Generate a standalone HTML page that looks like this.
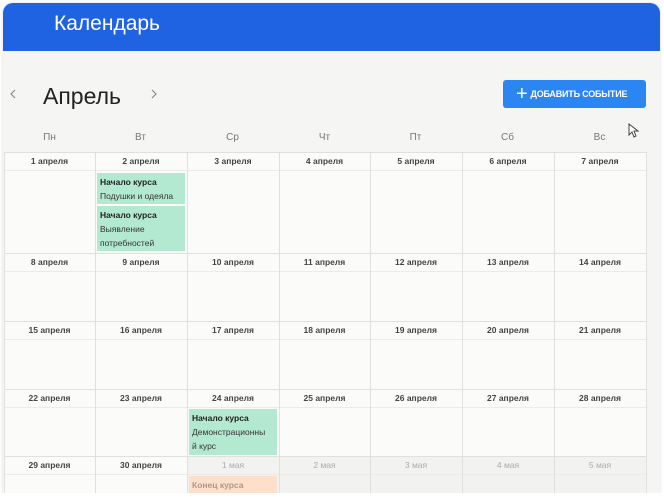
<!DOCTYPE html>
<html><head><meta charset="utf-8"><style>
*{margin:0;padding:0;box-sizing:border-box}
body{width:664px;height:499px;background:#fff;font-family:"Liberation Sans","DejaVu Sans",sans-serif;position:relative;overflow:hidden}
.page{position:absolute;left:3px;top:3px;width:657px;height:490px;background:#f5f6f4;border-radius:10px 10px 0 0;overflow:hidden;box-shadow:0 0 3px rgba(0,0,0,.15)}
.hdr{position:absolute;left:0;top:0;width:657px;height:48px;background:#1f63e2;color:#fff;font-size:21px;padding:9px 0 0 51px}
.a{position:absolute}
.dn{position:absolute;top:132px;font-size:10px;color:#777;text-align:center;width:91px}
.bg{position:absolute;background:#fbfcfa}
.dh{position:absolute;font-size:8.5px;font-weight:bold;color:#444;text-align:center;line-height:18px}
.dh.g{font-weight:normal;color:#aaa}
.hl{position:absolute;height:1px;background:#e0e0de}
.vl{position:absolute;width:1px;background:#e0e0de}
.ev{position:absolute;background:#b3e9d1;font-size:8.5px;color:#333;padding:2px 3px;line-height:14px}
.ev b{color:#222}
</style></head><body>
<div class="page">
<div class="hdr">Календарь</div>
<div class="a" style="left:5px;top:84px"><svg width="10" height="14"><path d="M7 3L3 7L7 11" fill="none" stroke="#888" stroke-width="1.2"/></svg></div>
<div class="a" style="left:40px;top:80px;color:#222;font-size:23px">Апрель</div>
<div class="a" style="left:146px;top:84px"><svg width="10" height="14"><path d="M3 3L7 7L3 11" fill="none" stroke="#888" stroke-width="1.2"/></svg></div>
<div class="a" style="left:500px;top:77px;width:143px;height:28px;background:#2b86f1;border-radius:3px;color:#fff;font-size:9px;font-weight:bold;line-height:28px;padding-left:13px;letter-spacing:-0.2px"><span style="font-size:20px;font-weight:normal;vertical-align:-3px;margin-right:3px">+</span>ДОБАВИТЬ СОБЫТИЕ</div>
<div class="a" style="left:625px;top:120px"><svg width="12" height="16"><path d="M1 1L1 12L4 9L6 14L8 13L6 8L10 8Z" fill="#fff" stroke="#444" stroke-width="1"/></svg></div>
</div>
<div id="g"></div>
<script>
var names=["Пн","Вт","Ср","Чт","Пт","Сб","Вс"];
var xs=[4,95,187,279,370,462,554,646];
var rows=[[152,170,253],[253,271,321],[321,339,389],[389,407,456],[456,474,496]];
var h="";
for(var i=0;i<7;i++)h+='<div class="dn" style="left:'+xs[i]+'px">'+names[i]+'</div>';
h+='<div class="bg" style="left:4px;top:152px;width:642px;height:344px"></div>';
h+='<div class="bg" style="left:187px;top:456px;width:459px;height:40px;background:#f2f3f1"></div>';
var d=1;
for(var r=0;r<5;r++){for(var c=0;c<7;c++){
var x=xs[c],w=xs[c+1]-x,R=rows[r];var lab,g=false;
if(d<=30)lab=d+" апреля";else{lab=(d-30)+" мая";g=true}
h+='<div class="dh'+(g?' g':'')+'" style="left:'+x+'px;top:'+R[0]+'px;width:'+w+'px">'+lab+'</div>';
d++;}
h+='<div class="hl" style="left:4px;top:'+rows[r][0]+'px;width:643px"></div>';
h+='<div class="hl" style="left:4px;top:'+rows[r][1]+'px;width:643px;background:#ebebe9"></div>';
}
for(var c=0;c<8;c++)h+='<div class="vl" style="left:'+xs[c]+'px;top:152px;height:344px"></div>';
h+='<div class="ev" style="left:97px;top:173px;width:88px;height:31px"><b>Начало курса</b><br>Подушки и одеяла</div>';
h+='<div class="ev" style="left:97px;top:206px;width:88px;height:45px"><b>Начало курса</b><br>Выявление<br>потребностей</div>';
h+='<div class="ev" style="left:189px;top:409px;width:88px;height:46px"><b>Начало курса</b><br>Демонстрационны<br>й курс</div>';
h+='<div class="ev" style="left:189px;top:476px;width:88px;height:20px;background:#fde0cc;color:#a88"><b style="color:#a98">Конец курса</b></div>';
h+='<div style="position:absolute;left:0;top:493px;width:664px;height:6px;background:#fff"></div>';
document.getElementById("g").innerHTML=h;
</script>
</body></html>
